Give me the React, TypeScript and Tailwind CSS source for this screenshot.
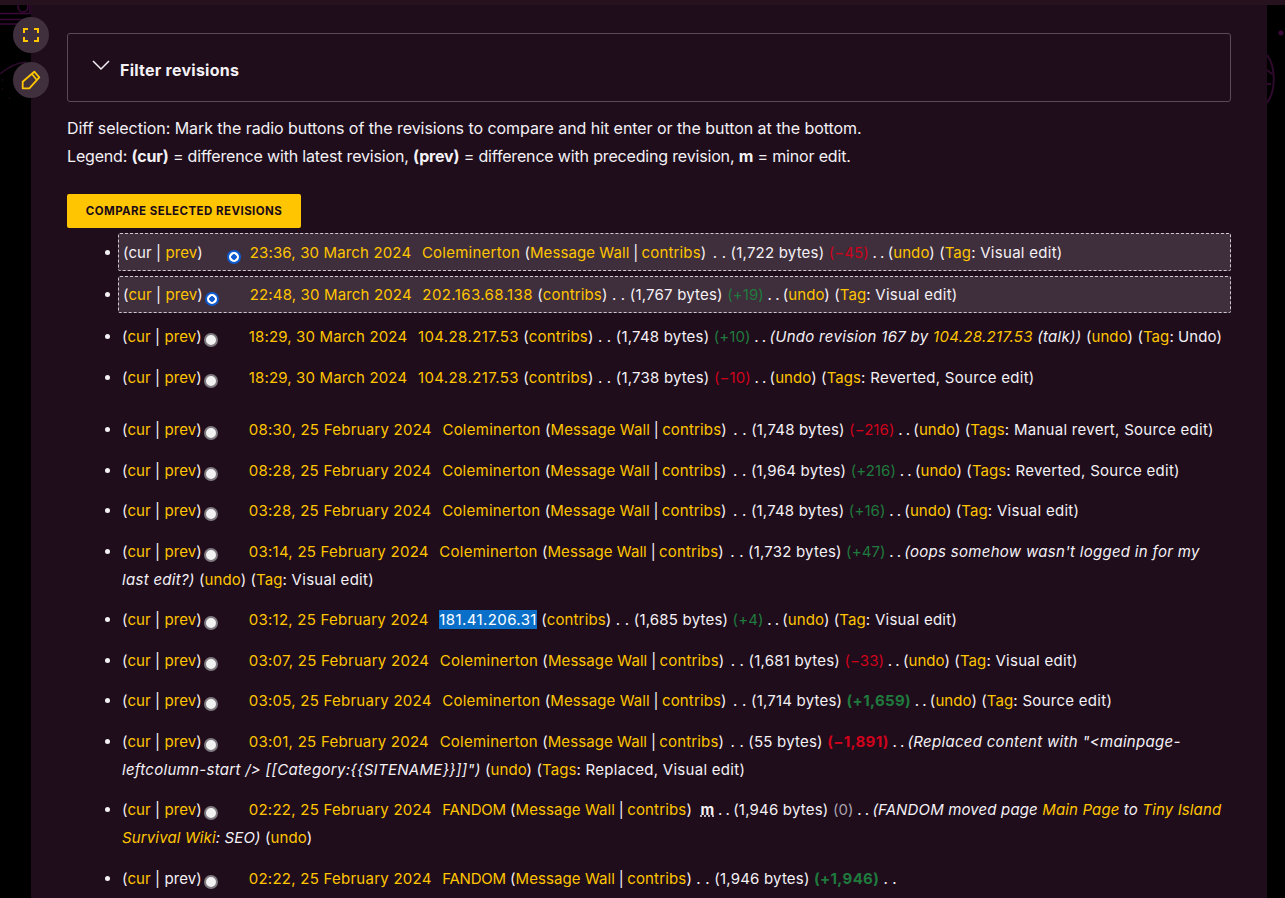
type Part = { t: string; c?: string }

const Y = 'text-[#ffc500]'
const W = 'text-[#f4f1f5]'

// one revision row: segments are flat so the wrap falls like the wiki's inline text
interface Rev {
  cur?: boolean
  prev?: boolean
  radio?: string
  date: string
  who: Part[]
  rest: Part[]
  li?: string
  box?: string
  boxed?: boolean
}

const sep = { t: ' | ', c: `${W} tracking-[-0.4px]` }
const dots = { t: ' . . ', c: `${W} tracking-[-0.5px]` }

const wall = (name: string, nameClass = 'tracking-[0.25px]', close = 'mr-[2px]'): Part[] => [
  { t: name, c: `${Y} ${nameClass}` },
  { t: ' (', c: W },
  { t: 'Message Wall', c: Y },
  sep,
  { t: 'contribs', c: `${Y} tracking-[0.15px]` },
  { t: ')', c: `${W} ${close}` },
]

const fandom = () => wall('FANDOM', 'tracking-[-0.25px]', '')

const ip = (addr: string): Part[] => [
  { t: addr, c: `${Y} tracking-[0.4px]` },
  { t: ' (', c: W },
  { t: 'contribs', c: `${Y} tracking-[0.15px]` },
  { t: ')', c: W },
]

const tail = (label: string, tags: string): Part[] => [
  dots,
  { t: '(', c: W },
  { t: 'undo', c: Y },
  { t: ') (', c: W },
  { t: label, c: Y },
  { t: ': ' + tags + ')', c: `${W} tracking-[0.28px]` },
]

const bytes = (n: string) => ({ t: ` . . (${n} bytes) `, c: `${W} tracking-[0.2px]` })
const up = (t: string) => ({ t, c: 'text-[#1f7a3d]' })
const down = (t: string) => ({ t, c: 'text-[#d0021b]' })
const bigUp = (t: string) => ({ t, c: 'text-[#1f7a3d] font-bold tracking-[0.35px]' })
const bigDown = (t: string) => ({ t, c: 'text-[#d0021b] font-bold tracking-[0.35px]' })
const note = (t: string, tr = 'tracking-[0.3px]') => ({ t, c: `${W} italic ${tr}` })
const noteLink = (t: string, tr = 'tracking-[0.3px]') => ({ t, c: `${Y} italic ${tr}` })
const tight = 'tracking-[0.14px]'

const revs: Rev[] = [
  { boxed: true, li: 'mb-[5px]', box: 'pt-[5px] pb-[3px]', radio: 'ml-[24px] mr-[9px]', prev: true, date: '23:36, 30 March 2024', who: wall('Coleminerton'), rest: [bytes('1,722'), down('(−45)'), ...tail('Tag', 'Visual edit')] },
  { boxed: true, li: 'mb-[10px]', box: 'pt-[4px] pb-[3px]', cur: true, prev: true, radio: 'ml-[2px] mr-[31px]', date: '22:48, 30 March 2024', who: ip('202.163.68.138'), rest: [bytes('1,767'), up('(+19)'), ...tail('Tag', 'Visual edit')] },
  { cur: true, prev: true, date: '18:29, 30 March 2024', who: ip('104.28.217.53'), rest: [bytes('1,748'), up('(+10)'), dots, note('(Undo revision 167 by '), noteLink('104.28.217.53'), note(' (talk))'), { t: ' (', c: W }, { t: 'undo', c: Y }, { t: ') (', c: W }, { t: 'Tag', c: Y }, { t: ': Undo)', c: W }] },
  { cur: true, prev: true, li: 'mb-[24.5px]', date: '18:29, 30 March 2024', who: ip('104.28.217.53'), rest: [bytes('1,738'), down('(−10)'), ...tail('Tags', 'Reverted, Source edit')] },
  { cur: true, prev: true, date: '08:30, 25 February 2024', who: wall('Coleminerton'), rest: [bytes('1,748'), down('(−216)'), ...tail('Tags', 'Manual revert, Source edit')] },
  { cur: true, prev: true, date: '08:28, 25 February 2024', who: wall('Coleminerton'), rest: [bytes('1,964'), up('(+216)'), ...tail('Tags', 'Reverted, Source edit')] },
  { cur: true, prev: true, date: '03:28, 25 February 2024', who: wall('Coleminerton'), rest: [bytes('1,748'), up('(+16)'), ...tail('Tag', 'Visual edit')] },
  { cur: true, prev: true, li: 'mb-[12.5px] pr-[6px]', date: '03:14, 25 February 2024', who: wall('Coleminerton'), rest: [bytes('1,732'), up('(+47)'), dots, note("(oops somehow wasn't logged in for my last edit?)"), { t: ' (', c: W }, { t: 'undo', c: Y }, { t: ') (', c: W }, { t: 'Tag', c: Y }, { t: ': Visual edit)', c: `${W} tracking-[0.28px]` }] },
  { cur: true, prev: true, date: '03:12, 25 February 2024', who: [{ t: '181.41.206.31', c: 'bg-[#0a6fc9] text-white tracking-[0.4px]' }, { t: ' (', c: W }, { t: 'contribs', c: `${Y} tracking-[0.15px]` }, { t: ')', c: W }], rest: [bytes('1,685'), up('(+4)'), ...tail('Tag', 'Visual edit')] },
  { cur: true, prev: true, date: '03:07, 25 February 2024', who: wall('Coleminerton'), rest: [bytes('1,681'), down('(−33)'), ...tail('Tag', 'Visual edit')] },
  { cur: true, prev: true, date: '03:05, 25 February 2024', who: wall('Coleminerton'), rest: [bytes('1,714'), bigUp('(+1,659)'), ...tail('Tag', 'Source edit')] },
  { cur: true, prev: true, date: '03:01, 25 February 2024', who: wall('Coleminerton'), rest: [bytes('55'), bigDown('(−1,891)'), dots, note('(Replaced content with "<mainpage-leftcolumn-start /> [[Category:{{SITENAME}}]]")'), { t: ' (', c: W }, { t: 'undo', c: Y }, { t: ') (', c: W }, { t: 'Tags', c: Y }, { t: ': Replaced, Visual edit)', c: `${W} tracking-[0.28px]` }] },
  { cur: true, prev: true, date: '02:22, 25 February 2024', who: fandom(), rest: [{ t: '  ', c: W }, { t: 'm', c: `${W} font-bold underline decoration-dotted` }, dots, { t: '(1,946 bytes) ', c: `${W} tracking-[0.2px]` }, { t: '(0)', c: 'text-[#a9a3ad]' }, dots, note('(FANDOM moved page ', tight), noteLink('Main Page', tight), note(' to ', tight), noteLink('Tiny Island Survival Wiki', tight), note(': SEO)', tight), { t: ' (', c: W }, { t: 'undo', c: Y }, { t: ')', c: W }] },
  { cur: true, date: '02:22, 25 February 2024', who: fandom(), rest: [bytes('1,946'), bigUp('(+1,946)'), { t: ' . .', c: W }] },
]

function Radio({ on }: { on: boolean }) {
  if (on) {
    return <span className="inline-block align-[-6px] w-[14px] h-[14px] rounded-full border-[2px] border-[#0f5bd0] bg-[radial-gradient(circle,#0f5bd0_2.5px,#ffffff_3px)]" />
  }
  return <span className="inline-block align-[-5px] w-[14px] h-[14px] rounded-full bg-[#f1f1f1] border-[2px] border-[#7f7a80]" />
}

function Row({ rev }: { rev: Rev }) {
  const box = rev.boxed
    ? `bg-[#3f2e3c] border border-dashed border-[#cfc8d0] rounded-[2px] px-1 -ml-[4px] ${rev.box ?? ''}`
    : ''
  const dateClass = rev.date.includes('February') ? 'tracking-[0.25px] mr-[2px]' : 'tracking-[0.15px] mr-[2px]'
  return (
    <li className={`list-disc marker:text-[#f4f1f5] ${rev.li ?? 'mb-[12.5px]'}`}>
      <div className={box}>
        <span className={W}>(</span>
        <span className={rev.cur ? Y : W}>cur</span>
        <span className={W}> | </span>
        <span className={rev.prev ? Y : W}>prev</span>
        <span className={W}>)</span>
        <span className={rev.radio ?? 'ml-[2px] mr-[31px]'}>
          <Radio on={!!rev.boxed} />
        </span>
        <span className={`${Y} ${dateClass}`}>{rev.date}</span>
        <span>{'\u00a0\u00a0'}</span>
        {rev.who.map((p, i) => (
          <span key={i} className={p.c}>{p.t}</span>
        ))}
        {rev.rest.map((p, i) => (
          <span key={i} className={`${p.c ?? ''} whitespace-pre-wrap`}>{p.t}</span>
        ))}
      </div>
    </li>
  )
}

export default function App() {
  return (
    <div className="relative h-[898px] overflow-hidden bg-black font-['Inter',sans-serif] text-[15px] leading-7 text-[#f4f1f5]">
      <svg className="absolute left-0 top-0" width="31" height="110" viewBox="0 0 31 110" fill="none" stroke="#3c0a3a" strokeWidth="1.5">
        <circle cx="23" cy="7" r="5" />
        <path d="M0 13.5h30V5M0 19.5h30M0 24h20" />
        <path d="M0 74c8-7 16-11 26-12" stroke="#2c0a2b" />
        <path d="M2 80h1M2 89h1M9 98h1" stroke="#240824" />
      </svg>
      <svg className="absolute right-0 top-0" width="18" height="110" viewBox="0 0 18 110" fill="none" stroke="#2e0a2d" strokeWidth="2">
        <circle cx="14" cy="33" r="2.5" fill="#3c0a3a" stroke="none" />
        <path d="M0 55c8 10 10 34 0 48M0 70l5 4M4 84l-4 0" />
      </svg>

      <div className="relative h-[5px] bg-[#26121f]" />
      <div className="relative ml-[31px] w-[1236px] h-full bg-[#1f0d1c]">
        <div className="pl-[36px] pr-[36px] pt-[28px]">
          <div className="h-[69px] rounded-[3px] border border-[#5a4a58] flex items-center pl-[24px] pt-[4px]">
            <svg width="18" height="11" viewBox="0 0 18 11" fill="none" stroke="#f4f1f5" strokeWidth="1.5" className="-mt-[8px]">
              <path d="M1 1l8 8 8-8" />
            </svg>
            <span className="ml-[10px] font-bold text-[16px] tracking-[0.25px]">Filter revisions</span>
          </div>
          <p className="mt-[12px] text-[16px] tracking-[-0.055px]">Diff selection: Mark the radio buttons of the revisions to compare and hit enter or the button at the bottom.</p>
          <p className="text-[16px] tracking-[-0.17px]">
            Legend: <b>(cur)</b> = difference with latest revision, <b>(prev)</b> = difference with preceding revision, <b>m</b> = minor edit.
          </p>
          <button className="mt-[24px] h-[34px] w-[234px] rounded-[2px] bg-[#ffc500] text-[#1a0a18] text-[11.5px] font-bold tracking-[0.45px]">
            COMPARE SELECTED REVISIONS
          </button>
          <ul className="ml-[55px] mt-[5px] tracking-[0.08px]">
            {revs.map((r, i) => (
              <Row key={i} rev={r} />
            ))}
          </ul>
        </div>
      </div>

      <button className="absolute left-[13px] top-[17px] w-9 h-9 rounded-full bg-[#40303e] flex items-center justify-center">
        <svg width="16" height="14" viewBox="0 0 16 14" fill="none" stroke="#ffc500" strokeWidth="2">
          <path d="M1 5V1h4M11 1h4v4M15 9v4h-4M5 13H1V9" />
        </svg>
      </button>
      <button className="absolute left-[13px] top-[62px] w-9 h-9 rounded-full bg-[#40303e] flex items-center justify-center">
        <svg width="20" height="20" viewBox="0 0 20 20" fill="none" stroke="#ffc500" strokeWidth="1.8" strokeLinejoin="round">
          <path d="M1.7 18.3v-6.6L13.3 1.7l5 5.6-10 11zM11 4l4.8 6" />
        </svg>
      </button>
    </div>
  )
}
